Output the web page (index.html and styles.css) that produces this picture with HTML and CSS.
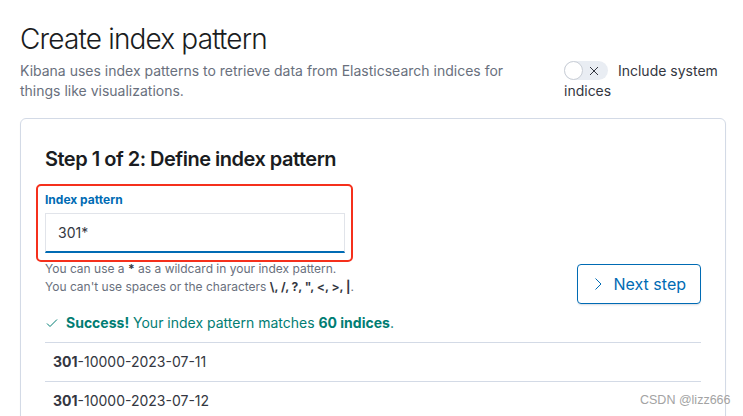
FILE: index.html
```html
<!DOCTYPE html>
<html lang="en">
  <head>
    <meta charset="UTF-8" />
    <title>Create index pattern</title>
    <meta name="viewport" content="width=device-width, initial-scale=1.0" />
    <link rel="stylesheet" href="styles.css">
  </head>
  <body>
    <!-- Page header -->
    <header class="page-header">
      <div class="header-text">
        <h1 class="page-title">Create index pattern</h1>
        <p class="page-desc">
          Kibana uses index patterns to retrieve data from Elasticsearch indices for
          things like visualizations.
        </p>
      </div>
      <div class="system-toggle">
        <span class="switch">
          <span class="switch-knob"></span>
          <svg class="switch-x" width="10" height="10" viewBox="0 0 10 10">
            <path d="M1 1L9 9M9 1L1 9" stroke="#343741" stroke-width="1" fill="none" />
          </svg>
        </span>
        Include system indices
      </div>
    </header>

    <!-- Step panel -->
    <section class="panel">
      <h2 class="step-title">Step 1 of 2: Define index pattern</h2>

      <div class="form-line">
        <div class="form-left">
          <div class="form-row annotated">
            <label class="field-label" for="pattern">Index pattern</label>
            <input class="field-input" id="pattern" type="text" value="301*" />
          </div>
          <div class="help-text">
            You can use a <b>*</b> as a wildcard in your index pattern.<br />
            You can't use spaces or the characters <b>\, /, ?, ", &lt;, &gt;, |</b>.
          </div>
        </div>
        <button class="next-btn" type="button">
          <svg width="16" height="16" viewBox="0 0 16 16">
            <path d="M5.5 2.5L11 8L5.5 13.5" stroke="#006bb4" stroke-width="1" fill="none" />
          </svg>
          Next step
        </button>
      </div>

      <div class="success">
        <svg width="12" height="12" viewBox="0 0 12 12">
          <path d="M1 6.5L4 9.5L11 2.5" stroke="#017d73" stroke-width="1" fill="none" />
        </svg>
        <span><b>Success!</b> Your index pattern matches <b>60 indices</b>.</span>
      </div>

      <div class="index-list">
        <div class="index-row"><b>301</b>-10000-2023-07-11</div>
        <div class="index-row"><b>301</b>-10000-2023-07-12</div>
      </div>
    </section>

    <div class="watermark">CSDN @lizz666</div>
  </body>
</html>
```

FILE: styles.css
```css
/* General */
html,
body {
  margin: 0;
  height: 100%;
  overflow: hidden;
}
body {
  font-family: Inter, "Noto Sans", sans-serif;
  color: #343741;
  background-color: #fff;
  padding: 21px 17px 0 20px;
  box-sizing: border-box;
  position: relative;
}

/* Header */
.page-header {
  display: flex;
  align-items: flex-start;
}
.header-text {
  width: 510px;
}
.page-title {
  margin: 0;
  font-size: 28px;
  font-weight: 300;
  line-height: 36px;
  letter-spacing: -0.03em;
  color: #1a1c21;
}
.page-desc {
  margin: 4px 0 0;
  font-size: 14px;
  line-height: 20px;
  color: #69707d;
}
.system-toggle {
  margin: 40px 2px 0 auto;
  width: 160px;
  font-size: 14px;
  line-height: 20px;
  color: #343741;
}
.switch {
  position: relative;
  display: inline-block;
  vertical-align: top;
  width: 44px;
  height: 19px;
  margin: 0 6px 0 0;
  border-radius: 10px;
  background-color: #e9edf3;
}
.switch-knob {
  position: absolute;
  left: 0;
  top: 0;
  width: 17px;
  height: 17px;
  border-radius: 50%;
  border: 1px solid #c9ced6;
  background-color: #fff;
}
.switch-x {
  position: absolute;
  left: 25px;
  top: 5px;
}

/* Panel */
.panel {
  margin-top: 17px;
  height: 400px;
  border: 1px solid #d3dae6;
  border-radius: 6px;
  padding: 24px;
  box-shadow: 0 1px 2px rgba(0, 0, 0, 0.04);
}
.step-title {
  margin: 0;
  font-size: 20px;
  font-weight: 600;
  line-height: 32px;
  letter-spacing: -0.025em;
  color: #1a1c21;
}

/* Form */
.form-line {
  display: flex;
  align-items: flex-end;
  justify-content: space-between;
  margin-top: 16px;
}
.form-row {
  display: flex;
  flex-direction: column;
  width: 300px;
}
.annotated {
  position: relative;
}
.annotated::after {
  content: "";
  position: absolute;
  top: -7px;
  left: -9px;
  right: -8px;
  bottom: -9px;
  border: 2px solid #f5301c;
  border-radius: 5px;
}
.field-label {
  font-size: 12px;
  font-weight: 700;
  line-height: 18px;
  color: #006bb4;
  margin-bottom: 4px;
}
.field-input {
  height: 40px;
  padding: 0 12px;
  border: 1px solid #e1e4ea;
  border-bottom: 2px solid #006bb4;
  background-color: #fff;
  font-family: inherit;
  font-size: 14px;
  color: #343741;
  box-sizing: border-box;
  outline: none;
}
.help-text {
  margin-top: 7px;
  padding-bottom: 8px;
  font-size: 12px;
  line-height: 18px;
  color: #69707d;
}
.help-text b {
  color: #343741;
}
.next-btn {
  display: flex;
  align-items: center;
  gap: 8px;
  height: 40px;
  padding: 0 14px 0 12px;
  border: 1px solid #006bb4;
  border-radius: 4px;
  background-color: #fff;
  color: #006bb4;
  font-family: inherit;
  font-size: 16px;
  box-shadow: 0 2px 2px -1px rgba(152, 162, 179, 0.4);
  cursor: pointer;
}

/* Result */
.success {
  display: flex;
  align-items: center;
  gap: 8px;
  margin: 9px 0 0 1px;
  font-size: 14px;
  line-height: 20px;
  color: #017d73;
}
.index-list {
  margin-top: 9px;
  width: 656px;
}
.index-row {
  border-top: 1px solid #d3dae6;
  padding: 9px 8px;
  font-size: 14px;
  line-height: 20px;
  color: #343741;
}

/* Watermark over the page */
.watermark {
  position: absolute;
  left: 640px;
  top: 393px;
  font-family: "Liberation Sans", Arial, sans-serif;
  font-size: 12.5px;
  color: #a3a3a3;
}
```
